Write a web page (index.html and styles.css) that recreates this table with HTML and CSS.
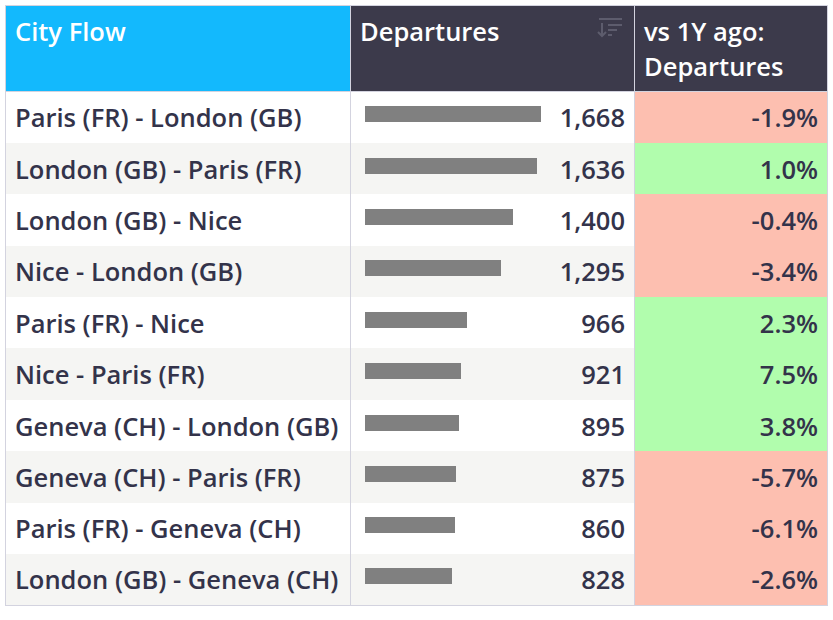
FILE: index.html
```html
<!DOCTYPE html>
<html lang="en">
<head>
<meta charset="utf-8">
<title>City Flow</title>
<link rel="stylesheet" href="styles.css">
</head>
<body>
<table class="grid">
  <colgroup>
    <col class="c1"><col class="c2"><col class="c3">
  </colgroup>
  <thead>
    <tr>
      <th class="h-city">City Flow</th>
      <th class="h-dep">
        <div class="h-dep-inner">
          <span>Departures</span>
          <svg class="sort" width="30" height="24" viewBox="0 0 30 24" aria-hidden="true">
            <g stroke="#5d5c6d" stroke-width="2" fill="none" stroke-linecap="butt">
              <line x1="4" y1="2" x2="27" y2="2"/>
              <line x1="7" y1="6" x2="7" y2="19"/>
              <polyline points="3,15 7,19 11,15"/>
              <line x1="13" y1="8" x2="27" y2="8"/>
              <line x1="13" y1="13" x2="22" y2="13"/>
              <line x1="13" y1="18" x2="17" y2="18"/>
            </g>
          </svg>
        </div>
      </th>
      <th class="h-vs">vs 1Y ago:<br>Departures</th>
    </tr>
  </thead>
  <tbody>
    <tr><td class="city">Paris (FR) - London (GB)</td><td class="dep"><div class="dep-inner"><span class="bar" style="width:176px"></span><span class="num">1,668</span></div></td><td class="pct neg">-1.9%</td></tr>
    <tr><td class="city">London (GB) - Paris (FR)</td><td class="dep"><div class="dep-inner"><span class="bar" style="width:172px"></span><span class="num">1,636</span></div></td><td class="pct pos">1.0%</td></tr>
    <tr><td class="city">London (GB) - Nice</td><td class="dep"><div class="dep-inner"><span class="bar" style="width:148px"></span><span class="num">1,400</span></div></td><td class="pct neg">-0.4%</td></tr>
    <tr><td class="city">Nice - London (GB)</td><td class="dep"><div class="dep-inner"><span class="bar" style="width:136px"></span><span class="num">1,295</span></div></td><td class="pct neg">-3.4%</td></tr>
    <tr><td class="city">Paris (FR) - Nice</td><td class="dep"><div class="dep-inner"><span class="bar" style="width:102px"></span><span class="num">966</span></div></td><td class="pct pos">2.3%</td></tr>
    <tr><td class="city">Nice - Paris (FR)</td><td class="dep"><div class="dep-inner"><span class="bar" style="width:96px"></span><span class="num">921</span></div></td><td class="pct pos">7.5%</td></tr>
    <tr><td class="city">Geneva (CH) - London (GB)</td><td class="dep"><div class="dep-inner"><span class="bar" style="width:94px"></span><span class="num">895</span></div></td><td class="pct pos">3.8%</td></tr>
    <tr><td class="city">Geneva (CH) - Paris (FR)</td><td class="dep"><div class="dep-inner"><span class="bar" style="width:91px"></span><span class="num">875</span></div></td><td class="pct neg">-5.7%</td></tr>
    <tr><td class="city">Paris (FR) - Geneva (CH)</td><td class="dep"><div class="dep-inner"><span class="bar" style="width:90px"></span><span class="num">860</span></div></td><td class="pct neg">-6.1%</td></tr>
    <tr><td class="city">London (GB) - Geneva (CH)</td><td class="dep"><div class="dep-inner"><span class="bar" style="width:87px"></span><span class="num">828</span></div></td><td class="pct neg">-2.6%</td></tr>
  </tbody>
</table>
</body>
</html>
```
FILE: styles.css
```css
html, body {
  margin: 0;
  padding: 0;
  background: #ffffff;
}
body {
  padding: 5px;
  font-family: "Open Sans", "Liberation Sans", sans-serif;
  font-weight: 600;
  font-size: 25.5px;
  color: #33334a;
}
.grid {
  border-collapse: collapse;
  table-layout: fixed;
  width: 822px;
  border: 1px solid #d3d3df;
}
.c1 { width: 345px; }
.c2 { width: 284px; }
.c3 { width: 193px; }

th {
  text-align: left;
  vertical-align: top;
  color: #ffffff;
  font-weight: 600;
  line-height: 35px;
  height: 86px;
  box-sizing: border-box;
  padding: 8px 9px 6px 9px;
  border-right: 1px solid #d3d3df;
  border-bottom: 1px solid #d3d3df;
}
.h-city { background: #13b9fd; }
.h-dep, .h-vs { background: #3c3a4b; }
.h-dep-inner {
  display: flex;
  justify-content: space-between;
  align-items: flex-start;
}
.sort { margin-top: 3px; margin-right: 0; }

td {
  height: 51.4px;
  box-sizing: border-box;
  padding: 0 9px;
  line-height: 32px;
  vertical-align: middle;
  white-space: nowrap;
  border-right: 1px solid #d3d3df;
}
tbody tr:nth-child(even) td.city,
tbody tr:nth-child(even) td.dep { background: #f5f5f3; }

.dep { padding-left: 14px; }
.dep-inner {
  display: flex;
  align-items: center;
  justify-content: space-between;
}
.bar {
  display: block;
  height: 16px;
  background: #808080;
  margin-top: -6px;
}
.num { text-align: right; }

.pct { text-align: right; }
.neg { background: #fdbfb0; }
.pos { background: #b1fdad; }
```
